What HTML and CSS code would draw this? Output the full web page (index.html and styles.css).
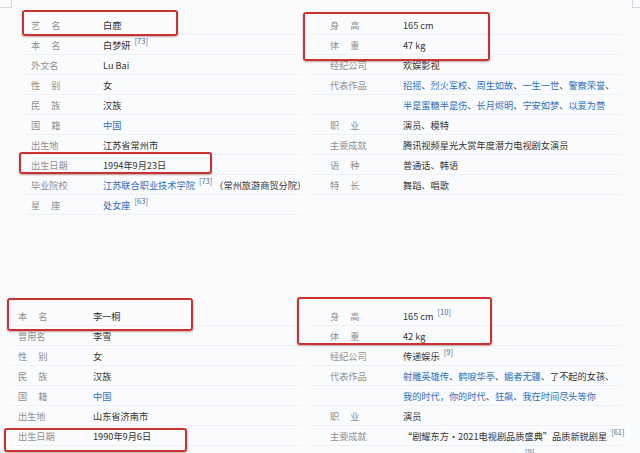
FILE: index.html
```html
<!DOCTYPE html>
<html lang="zh-CN">
<head>
    <meta charset="UTF-8">
    <title>人物信息</title>
    <link rel="stylesheet" href="styles.css">
</head>
<body>
    <section class="card card-top">
        <span class="corner corner-left"></span>
        <span class="corner corner-right"></span>
        <dl class="col col-left">
            <div class="row"><dt class="sp">艺名</dt><dd>白鹿</dd></div>
            <div class="row"><dt class="sp">本名</dt><dd>白梦妍<sup>[73]</sup></dd></div>
            <div class="row"><dt>外文名</dt><dd>Lu Bai</dd></div>
            <div class="row"><dt class="sp">性别</dt><dd>女</dd></div>
            <div class="row"><dt class="sp">民族</dt><dd>汉族</dd></div>
            <div class="row"><dt class="sp">国籍</dt><dd><a>中国</a></dd></div>
            <div class="row"><dt>出生地</dt><dd>江苏省常州市</dd></div>
            <div class="row"><dt>出生日期</dt><dd>1994年9月23日</dd></div>
            <div class="row"><dt>毕业院校</dt><dd><a>江苏联合职业技术学院</a><sup>[73]</sup><span class="note">（常州旅游商贸分院）</span></dd></div>
            <div class="row"><dt class="sp">星座</dt><dd><a>处女座</a><sup>[63]</sup></dd></div>
        </dl>
        <dl class="col col-right">
            <div class="row"><dt class="sp">身高</dt><dd>165 cm</dd></div>
            <div class="row"><dt class="sp">体重</dt><dd>47 kg</dd></div>
            <div class="row"><dt>经纪公司</dt><dd>欢娱影视</dd></div>
            <div class="row"><dt>代表作品</dt><dd><a>招摇</a>、<a>烈火军校</a>、<a>周生如故</a>、<a>一生一世</a>、<a>警察荣誉</a>、</dd></div>
            <div class="row"><dt></dt><dd><a>半是蜜糖半是伤</a>、<a>长月烬明</a>、<a>宁安如梦</a>、<a>以爱为营</a></dd></div>
            <div class="row"><dt class="sp">职业</dt><dd>演员、模特</dd></div>
            <div class="row"><dt>主要成就</dt><dd>腾讯视频星光大赏年度潜力电视剧女演员</dd></div>
            <div class="row"><dt class="sp">语种</dt><dd>普通话、韩语</dd></div>
            <div class="row"><dt class="sp">特长</dt><dd>舞蹈、唱歌</dd></div>
        </dl>
        <span class="mark mark-a"></span>
        <span class="mark mark-b"></span>
        <span class="mark mark-c"></span>
    </section>

    <section class="card card-bottom">
        <dl class="col col-left">
            <div class="row"><dt class="sp">本名</dt><dd>李一桐</dd></div>
            <div class="row"><dt>曾用名</dt><dd>李雪</dd></div>
            <div class="row"><dt class="sp">性别</dt><dd>女</dd></div>
            <div class="row"><dt class="sp">民族</dt><dd>汉族</dd></div>
            <div class="row"><dt class="sp">国籍</dt><dd><a>中国</a></dd></div>
            <div class="row"><dt>出生地</dt><dd>山东省济南市</dd></div>
            <div class="row"><dt>出生日期</dt><dd>1990年9月6日</dd></div>
        </dl>
        <dl class="col col-right">
            <div class="row"><dt class="sp">身高</dt><dd>165 cm<sup>[10]</sup></dd></div>
            <div class="row"><dt class="sp">体重</dt><dd>42 kg</dd></div>
            <div class="row"><dt>经纪公司</dt><dd>传递娱乐<sup>[9]</sup></dd></div>
            <div class="row"><dt>代表作品</dt><dd><a>射雕英雄传</a>、<a>鹤唳华亭</a>、<a>媚者无疆</a>、了不起的女孩、</dd></div>
            <div class="row"><dt></dt><dd><a>我的时代，你的时代</a>、<a>狂飙</a>、<a>我在时间尽头等你</a></dd></div>
            <div class="row"><dt class="sp">职业</dt><dd>演员</dd></div>
            <div class="row"><dt>主要成就</dt><dd>“剧耀东方·2021电视剧品质盛典”品质新锐剧星<sup>[61]</sup></dd></div>
            <div class="row row-cut"><dt></dt><dd><span class="gap"></span><sup>[9]</sup></dd></div>
        </dl>
        <span class="mark mark-d"></span>
        <span class="mark mark-e"></span>
        <span class="mark mark-f"></span>
    </section>
</body>
</html>
```

FILE: styles.css
```css
body {
    margin: 0;
    background: #fafbfd;
    font-family: "Noto Sans CJK SC", "Noto Sans", sans-serif;
    font-size: 9.2px;
    color: #333;
    height: 453px;
    overflow: hidden;
}
.card {
    position: relative;
    display: grid;
    grid-template-columns: 275px 312px;
    column-gap: 10px;
    padding-left: 25px;
    padding-top: 15px;
}
.card-bottom {
    margin-top: 76px;
    padding-left: 12px;
    grid-template-columns: 288px 312px;
}
.col {
    margin: 0;
}
.row {
    display: flex;
    align-items: center;
    height: 20px;
    box-sizing: border-box;
    border-bottom: 1px solid #eef0f4;
    white-space: nowrap;
}
dt {
    width: 72px;
    flex-shrink: 0;
    padding-left: 6px;
    color: #8f8f8f;
}
.col-right dt {
    width: 73px;
    padding-left: 20px;
}
.card-bottom .col-left dt {
    width: 75px;
}
dt.sp {
    letter-spacing: 11px;
}
dd {
    margin: 0;
}
a {
    color: #2e6fb8;
}
sup {
    font-size: 7.5px;
    color: #4d6b93;
    margin-left: 4px;
    vertical-align: 5px;
    line-height: 0;
}
.note {
    margin-left: 2px;
}
.row-cut {
    border-bottom: none;
}
.gap {
    display: inline-block;
    width: 118px;
}
.mark {
    position: absolute;
    box-sizing: border-box;
    border: 2px solid #cc3131;
    border-radius: 3px;
    box-shadow: 0 1px 2px rgba(80, 0, 0, 0.35);
}
.mark-a { left: 22px; top: 10px; width: 156px; height: 26px; }
.mark-b { left: 303px; top: 12px; width: 187px; height: 49px; }
.mark-c { left: 19px; top: 152px; width: 193px; height: 22px; }
.mark-d { left: 7px; top: 7px; width: 186px; height: 33px; }
.mark-e { left: 297px; top: 6px; width: 195px; height: 48px; }
.mark-f { left: 4px; top: 137px; width: 183px; height: 24px; }
.corner {
    position: absolute;
    top: 0;
    width: 12px;
    height: 8px;
    box-sizing: border-box;
    border-bottom: 1px solid #d4d6da;
}
.corner-left {
    left: 0;
    border-right: 1px solid #d4d6da;
}
.corner-right {
    right: 0;
    width: 8px;
    border-left: 1px solid #d4d6da;
}
```
